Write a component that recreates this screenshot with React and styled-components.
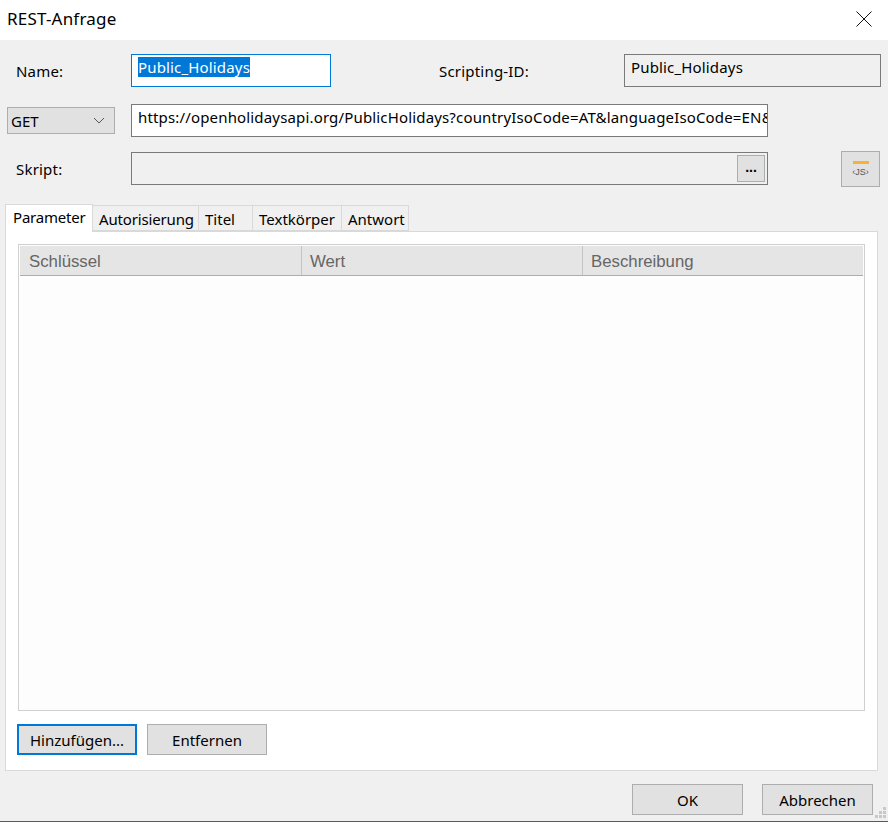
import React from "react";
import styled, { createGlobalStyle } from "styled-components";

const Global = createGlobalStyle`
  html, body {
    margin: 0;
    padding: 0;
    background: #f0f0f0;
  }
  * {
    box-sizing: border-box;
  }
`;

const Dialog = styled.div`
  position: relative;
  width: 888px;
  height: 822px;
  display: flex;
  flex-direction: column;
  overflow: hidden;
  background: #f0f0f0;
  border-bottom: 1px solid #5a5a5a;
  color: #000;
  font-family: "Noto Sans", sans-serif;
  font-size: 15px;
`;

const TitleBar = styled.div`
  height: 40px;
  flex: none;
  display: flex;
  align-items: center;
  justify-content: space-between;
  padding: 0 16px 3px 7px;
  background: #fff;
  font-size: 17px;
  letter-spacing: 0.2px;
`;

const Row = styled.div`
  height: 33px;
  flex: none;
  display: flex;
  align-items: center;
  margin-top: ${(props) => props.$top}px;
  padding-left: ${(props) => props.$left}px;
`;

const Label = styled.label`
  flex: none;
  width: ${(props) => props.$width}px;
  margin-left: ${(props) => props.$offset || 0}px;
  letter-spacing: 0.2px;
`;

const Field = styled.div`
  position: relative;
  flex: none;
  width: ${(props) => props.$width}px;
  height: 33px;
  padding: 1px 3px 0 6px;
  overflow: hidden;
  white-space: nowrap;
  line-height: 22px;
  letter-spacing: 0.16px;
  border: 1px solid ${(props) => (props.$focused ? "#0078d7" : "#7a7a7a")};
  background: ${(props) => (props.$readOnly ? "#f0f0f0" : "#fff")};
`;

const Selected = styled.span`
  display: inline-block;
  height: 20px;
  line-height: 20px;
  background: #0078d7;
  color: #fff;
`;

const Select = styled.div`
  flex: none;
  width: 108px;
  height: 27px;
  margin-right: 16px;
  padding: 0 9px 0 3px;
  display: flex;
  align-items: center;
  justify-content: space-between;
  background: #e1e1e1;
  border: 1px solid #adadad;
`;

const DotsButton = styled.div`
  position: absolute;
  top: 2px;
  right: 2px;
  width: 28px;
  height: 27px;
  display: flex;
  align-items: center;
  justify-content: center;
  padding-bottom: 4px;
  background: #e1e1e1;
  border: 1px solid #adadad;
  font-family: "Liberation Sans", sans-serif;
  font-weight: 700;
  font-size: 14px;
  letter-spacing: 0;
`;

const ScriptButton = styled.div`
  flex: none;
  width: 39px;
  height: 36px;
  margin-left: 73px;
  padding-top: 9px;
  display: flex;
  flex-direction: column;
  align-items: center;
  background: #e1e1e1;
  border: 1px solid #adadad;
`;

const ScriptBar = styled.div`
  width: 16px;
  height: 3px;
  background: #f5b335;
`;

const ScriptText = styled.span`
  font-family: "Liberation Sans", sans-serif;
  font-size: 9px;
  line-height: 12px;
  margin-top: 2px;
  color: #555;
`;

const TabStrip = styled.div`
  height: 27px;
  flex: none;
  display: flex;
  align-items: flex-end;
  margin-top: 19px;
  padding-left: 5px;
`;

const Tab = styled.div`
  flex: none;
  width: ${(props) => props.$width}px;
  height: ${(props) => (props.$active ? 28 : 26)}px;
  margin-bottom: ${(props) => (props.$active ? -1 : 0)}px;
  margin-left: ${(props) => (props.$active ? 0 : -1)}px;
  position: relative;
  z-index: ${(props) => (props.$active ? 1 : 0)};
  padding: ${(props) => (props.$active ? "1px 0 0 7px" : "2px 0 0 6px")};
  line-height: 22px;
  white-space: nowrap;
  letter-spacing: ${(props) => props.$spacing || 0}px;
  background: ${(props) => (props.$active ? "#fff" : "#f0f0f0")};
  border: 1px solid #d9d9d9;
  border-bottom: ${(props) => (props.$active ? "none" : "1px solid #d9d9d9")};
`;

const Panel = styled.div`
  width: 873px;
  height: 540px;
  flex: none;
  margin-left: 5px;
  padding: 12px 12px 14px 12px;
  display: flex;
  flex-direction: column;
  background: #fff;
  border: 1px solid #d9d9d9;
`;

const Table = styled.div`
  height: 467px;
  flex: none;
  padding: 1px;
  background: #fdfdfd;
  border: 1px solid #d0d0d0;
`;

const TableHeader = styled.div`
  height: 30px;
  display: grid;
  grid-template-columns: 282px 281px 280px;
  background: #e5e5e5;
  border-bottom: 1px solid #adadad;
`;

const HeaderCell = styled.div`
  padding: 5px 0 0 ${(props) => (props.$first ? 9 : 8)}px;
  line-height: 22px;
  font-family: "Liberation Sans", sans-serif;
  font-size: 16.8px;
  color: #666;
  border-right: ${(props) => (props.$last ? "none" : "1px solid #c4c4c4")};
`;

const PanelActions = styled.div`
  display: flex;
  gap: 10px;
  margin: 13px 0 0 -1px;
`;

const Button = styled.div`
  flex: none;
  width: ${(props) => props.$width}px;
  height: 31px;
  display: flex;
  align-items: center;
  justify-content: center;
  background: #e1e1e1;
  border: ${(props) => (props.$primary ? "2px solid #0078d7" : "1px solid #adadad")};
`;

const Footer = styled.div`
  display: flex;
  justify-content: flex-end;
  gap: 19px;
  margin-top: 13px;
  padding-right: 15px;
`;

const Grip = styled.svg`
  position: absolute;
  right: 1px;
  bottom: 2px;
`;

const CloseIcon = () => (
  <svg width="16" height="16" viewBox="0 0 16 16">
    <path d="M0.5 0.5 L15.5 15.5 M15.5 0.5 L0.5 15.5" stroke="#111" strokeWidth="1" fill="none" />
  </svg>
);

const Chevron = () => (
  <svg width="12" height="7" viewBox="0 0 12 7">
    <path d="M1 1 L6 6 L11 1" stroke="#555" strokeWidth="1" fill="none" />
  </svg>
);

const tabs = [
  { name: "Parameter", width: 88, active: true, spacing: -0.2 },
  { name: "Autorisierung", width: 107, spacing: -0.15 },
  { name: "Titel", width: 55 },
  { name: "Textkörper", width: 90 },
  { name: "Antwort", width: 68 },
];

const columns = ["Schlüssel", "Wert", "Beschreibung"];

const url =
  "https://openholidaysapi.org/PublicHolidays?countryIsoCode=AT&languageIsoCode=EN&validFrom=2023-01-01";

export default function App() {
  return (
    <>
      <Global />
      <Dialog>
        <TitleBar>
          <span>REST-Anfrage</span>
          <CloseIcon />
        </TitleBar>

        <Row $top={14} $left={16}>
          <Label $width={115}>Name:</Label>
          <Field $width={200} $focused>
            <Selected>Public_Holidays</Selected>
          </Field>
          <Label $width={185} $offset={108}>Scripting-ID:</Label>
          <Field $width={257} $readOnly>Public_Holidays</Field>
        </Row>

        <Row $top={17} $left={7}>
          <Select>
            <span>GET</span>
            <Chevron />
          </Select>
          <Field $width={637}>{url}</Field>
        </Row>

        <Row $top={15} $left={16}>
          <Label $width={115}>Skript:</Label>
          <Field $width={637} $readOnly>
            <DotsButton>...</DotsButton>
          </Field>
          <ScriptButton>
            <ScriptBar />
            <ScriptText>‹JS›</ScriptText>
          </ScriptButton>
        </Row>

        <TabStrip>
          {tabs.map((tab) => (
            <Tab key={tab.name} $width={tab.width} $active={tab.active} $spacing={tab.spacing}>
              {tab.name}
            </Tab>
          ))}
        </TabStrip>

        <Panel>
          <Table>
            <TableHeader>
              {columns.map((col, i) => (
                <HeaderCell key={col} $first={i === 0} $last={i === columns.length - 1}>
                  {col}
                </HeaderCell>
              ))}
            </TableHeader>
          </Table>
          <PanelActions>
            <Button $width={120} $primary>Hinzufügen...</Button>
            <Button $width={120}>Entfernen</Button>
          </PanelActions>
        </Panel>

        <Footer>
          <Button $width={111}>OK</Button>
          <Button $width={111}>Abbrechen</Button>
        </Footer>

        <Grip width="12" height="12" viewBox="0 0 12 12">
          <path d="M8 0h3v3H8zM4 4h3v3H4zM8 4h3v3H8zM0 8h3v3H0zM4 8h3v3H4zM8 8h3v3H8z" fill="#c8c8c8" />
        </Grip>
      </Dialog>
    </>
  );
}
